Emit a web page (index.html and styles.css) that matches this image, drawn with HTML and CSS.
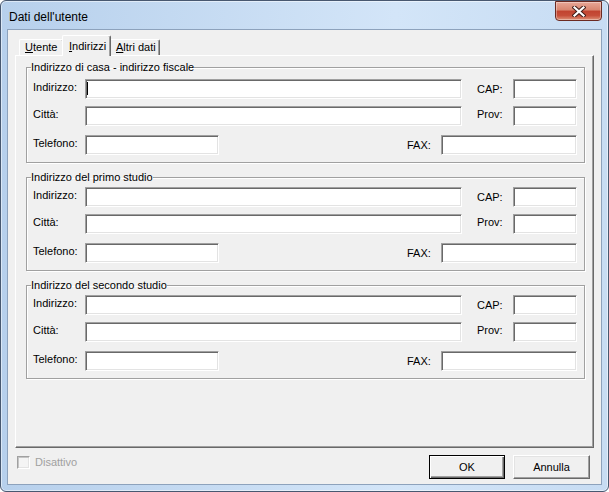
FILE: index.html
```html
<!DOCTYPE html>
<html lang="it">

<head>
  <meta charset="UTF-8">
  <title>Dati dell'utente</title>
  <link rel="stylesheet" href="styles.css">
</head>

<body>
  <div class="window">
    <div class="titlebar">
      <span class="title">Dati dell'utente</span>
      <button class="close">
        <svg width="14" height="11" viewBox="0 0 14 11">
          <path d="M2.5 1.5 L11.5 9.5 M11.5 1.5 L2.5 9.5" stroke="#3e1d18" stroke-width="4.2" stroke-linecap="square" fill="none" />
          <path d="M2.5 1.5 L11.5 9.5 M11.5 1.5 L2.5 9.5" stroke="#fff" stroke-width="2.2" stroke-linecap="square" fill="none" />
        </svg>
      </button>
    </div>

    <div class="client">
      <div class="tabs">
        <div class="tab tab-first"><u>U</u>tente</div>
        <div class="tab active"><u>I</u>ndirizzi</div>
        <div class="tab tab-last"><u>A</u>ltri dati</div>
      </div>

      <div class="panel">
        <fieldset class="group">
          <legend>Indirizzo di casa - indirizzo fiscale</legend>
          <div class="row">
            <span class="lbl">Indirizzo:</span>
            <span class="field wide"><span class="caret"></span></span>
            <span class="lbl side mid">CAP:</span>
            <span class="field small"></span>
          </div>
          <div class="row">
            <span class="lbl">Città:</span>
            <span class="field wide"></span>
            <span class="lbl side">Prov:</span>
            <span class="field small"></span>
          </div>
          <div class="row">
            <span class="lbl">Telefono:</span>
            <span class="field tel"></span>
            <span class="lbl fax-lbl mid">FAX:</span>
            <span class="field fax"></span>
          </div>
        </fieldset>

        <fieldset class="group">
          <legend>Indirizzo del primo studio</legend>
          <div class="row">
            <span class="lbl">Indirizzo:</span>
            <span class="field wide"></span>
            <span class="lbl side mid">CAP:</span>
            <span class="field small"></span>
          </div>
          <div class="row">
            <span class="lbl">Città:</span>
            <span class="field wide"></span>
            <span class="lbl side">Prov:</span>
            <span class="field small"></span>
          </div>
          <div class="row">
            <span class="lbl">Telefono:</span>
            <span class="field tel"></span>
            <span class="lbl fax-lbl mid">FAX:</span>
            <span class="field fax"></span>
          </div>
        </fieldset>

        <fieldset class="group">
          <legend>Indirizzo del secondo studio</legend>
          <div class="row">
            <span class="lbl">Indirizzo:</span>
            <span class="field wide"></span>
            <span class="lbl side mid">CAP:</span>
            <span class="field small"></span>
          </div>
          <div class="row">
            <span class="lbl">Città:</span>
            <span class="field wide"></span>
            <span class="lbl side">Prov:</span>
            <span class="field small"></span>
          </div>
          <div class="row">
            <span class="lbl">Telefono:</span>
            <span class="field tel"></span>
            <span class="lbl fax-lbl mid">FAX:</span>
            <span class="field fax"></span>
          </div>
        </fieldset>
      </div>

      <div class="footer">
        <label class="check">
          <span class="box"></span>
          <span>Disattivo</span>
        </label>
        <div class="buttons">
          <button class="btn btn-default">OK</button>
          <button class="btn btn-cancel">Annulla</button>
        </div>
      </div>
    </div>
  </div>
</body>

</html>
```

FILE: styles.css
```css
* {
  box-sizing: border-box;
}

body {
  margin: 0;
  font-family: "Liberation Sans", Arial, sans-serif;
  font-size: 11px;
  color: #000;
  background: #fff;
}

/* window frame */
.window {
  width: 609px;
  height: 492px;
  border: 1px solid #485870;
  border-radius: 6px;
  background: linear-gradient(to right, #b7d0ec, #d3e5f8 65%, #c7dcf3);
  box-shadow: inset 0 0 0 1px rgba(255, 255, 255, 0.5);
  display: flex;
  flex-direction: column;
}

.titlebar {
  height: 28px;
  display: flex;
  justify-content: space-between;
  align-items: flex-start;
  padding: 0 6px 0 8px;
}

.title {
  font-size: 12px;
  line-height: 14px;
  padding-top: 9px;
}

.close {
  width: 47px;
  height: 20px;
  padding: 0;
  border: 1px solid #6b2a22;
  border-radius: 0 0 4px 4px;
  background: linear-gradient(#e8a797, #d8856f 45%, #c1432f 50%, #c64e39 75%, #de9278);
  box-shadow: inset 0 0 0 1px rgba(255, 255, 255, 0.35);
  display: flex;
  justify-content: center;
  align-items: center;
}

.client {
  flex: 1;
  margin: 0 6px 6px;
  border: 1px solid #8da2bc;
  background: #f0f0f0;
  display: flex;
  flex-direction: column;
}

/* tabs */
.tabs {
  height: 25px;
  display: flex;
  align-items: flex-end;
  padding: 5px 0 0 11px;
}

.tab {
  width: 45px;
  height: 16px;
  padding: 1px 0 0 5px;
  line-height: 13px;
  white-space: nowrap;
  background: #f0f0f0;
  border: 1px solid #fff;
  border-bottom: 0;
  border-right-color: #696969;
  border-radius: 2px 2px 0 0;
  box-shadow: inset -1px 0 #a0a0a0;
}

.tab.active {
  width: 49px;
  height: 21px;
  margin: 0 -2px -1px;
  padding: 4px 0 0 6px;
  position: relative;
}

.tab-last {
  width: 51px;
  padding-left: 6px;
}

.panel {
  flex: 1;
  margin: 0 7px;
  border: 1px solid;
  border-color: #fff #696969 #696969 #fff;
  box-shadow: inset -1px -1px #a0a0a0;
  padding: 5px 8px 0 10px;
}

/* group boxes */
.group {
  margin: 0 0 8px;
  min-width: 0;
  padding: 3px 7px 7px 6px;
  border: 1px solid #a0a0a0;
  box-shadow: inset 1px 1px #fff, 1px 1px #fff;
}

.group:first-child {
  padding-top: 5px;
}

.group legend {
  padding: 0;
  margin-left: -2px;
  line-height: 13px;
}

.row {
  height: 20px;
  display: flex;
  align-items: flex-start;
}

.row + .row {
  margin-top: 7px;
}

.row:last-child {
  margin-top: 9px;
}

.lbl {
  width: 52px;
  padding-top: 2px;
  line-height: 13px;
  white-space: nowrap;
}

.lbl.side {
  width: 51px;
  padding-left: 15px;
}

.lbl.mid {
  align-self: center;
  padding-top: 1px;
}

.fax-lbl {
  width: 34px;
  margin-left: auto;
}

.field {
  height: 20px;
  background: #fff;
  border: 1px solid;
  border-color: #a0a0a0 #fff #fff #a0a0a0;
  box-shadow: inset 1px 1px #696969, inset -1px -1px #e3e3e3;
}

.wide {
  width: 377px;
}

.small {
  width: 64px;
}

.tel {
  width: 134px;
}

.fax {
  width: 136px;
}

.caret {
  display: block;
  width: 1px;
  height: 13px;
  margin: 2px 0 0 1px;
  background: #000;
}

/* bottom bar */
.footer {
  height: 36px;
  display: flex;
  align-items: flex-start;
  padding: 7px 11px 0 9px;
}

.check {
  display: flex;
  align-items: center;
  gap: 5px;
  margin-top: 1px;
  line-height: 13px;
  color: #a0a0a0;
}

.box {
  width: 13px;
  height: 13px;
  border: 1px solid;
  border-color: #a0a0a0 #fff #fff #a0a0a0;
  box-shadow: inset 1px 1px #c4c4c4, inset -1px -1px #e3e3e3;
  background: #f4f4f4;
}

.buttons {
  margin-left: auto;
  display: flex;
  gap: 8px;
}

.btn {
  height: 24px;
  padding: 0;
  font-family: "Liberation Sans", Arial, sans-serif;
  font-size: 11px;
  color: #000;
  background: #f0f0f0;
  border: 1px solid;
  border-color: #fff #696969 #696969 #fff;
  box-shadow: inset -1px -1px #a0a0a0, inset 1px 1px #e3e3e3;
}

.btn-default {
  width: 76px;
  border-color: #000;
  box-shadow: inset 1px 1px #fff, inset -1px -1px #696969, inset -2px -2px #a0a0a0;
}

.btn-cancel {
  width: 77px;
}
```
